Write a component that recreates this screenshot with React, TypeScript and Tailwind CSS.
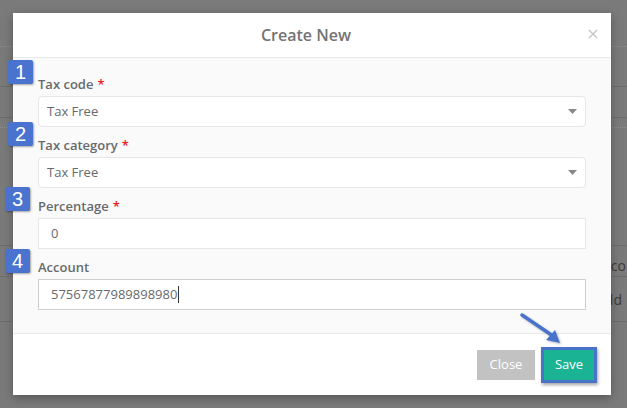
import React from "react";

const fields = [
  { label: "Tax code", required: true, value: "Tax Free", select: true },
  { label: "Tax category", required: true, value: "Tax Free", select: true },
  { label: "Percentage", required: true, value: "0", select: false },
  { label: "Account", required: false, value: "57567877989898980", select: false, focused: true },
];

const badges = [
  { n: "1", cls: "left-[8px] top-[60px]" },
  { n: "2", cls: "left-[8px] top-[122px]" },
  { n: "3", cls: "left-[5px] top-[187px]" },
  { n: "4", cls: "left-[5px] top-[249px]" },
];

const Badge = ({ n, cls }: { n: string; cls: string }) => (
  <div
    className={`absolute ${cls} z-20 flex h-[24px] w-[25px] items-center justify-center rounded-[2px] bg-[#4a73cf] text-[20px] leading-none text-white shadow-[1px_1px_2px_rgba(0,0,0,0.35)]`}
    style={{ fontFamily: "'Liberation Sans', Arial, sans-serif" }}
  >
    {n}
  </div>
);

export default function App() {
  return (
    <div
      className="relative h-[408px] w-[627px] overflow-hidden bg-[#7a7a7a]"
      style={{ fontFamily: "'Open Sans', 'Noto Sans', sans-serif" }}
    >
      {/* page behind the overlay, mostly hidden by the modal */}
      <div className="flex flex-col">
        <div className="h-[47px] border-b border-dotted border-[#8e8e8e]" />
        <div className="h-[40px] border-b border-[#6c6c6c]" />
        <div className="h-[31px] border-b border-[#6c6c6c]" />
        <div className="h-[10px] border-b border-dotted border-[#8e8e8e]" />
        <div className="h-[118px] border-b border-[#6c6c6c]" />
        <div className="flex h-[31px] items-end justify-end overflow-hidden whitespace-nowrap border-b border-[#6c6c6c] pr-[1px] text-[14px] text-[#3c3c3c]">
          Acco
        </div>
        <div className="flex h-[45px] items-center justify-end overflow-hidden whitespace-nowrap border-b border-[#6c6c6c] pr-[5px] text-[14px] text-[#3c3c3c]">
          Add
        </div>
      </div>

      {badges.map((b) => (
        <Badge key={b.n} n={b.n} cls={b.cls} />
      ))}

      {/* modal */}
      <div className="absolute left-[13px] top-[13px] z-10 flex h-[382px] w-[598px] flex-col bg-white shadow-[0_3px_9px_rgba(0,0,0,0.3)]">
        <div className="relative flex h-[45px] shrink-0 items-center justify-center border-b border-[#e7eaec] pr-[12px]">
          <h4 className="text-[16px] font-semibold text-[#737373]">Create New</h4>
          <svg className="absolute right-[13px] top-[16px]" width="10" height="10" viewBox="0 0 10 10">
            <path d="M1 1 L9 9 M9 1 L1 9" stroke="#c4c4c4" strokeWidth="1.4" />
          </svg>
        </div>

        <div className="h-[275px] shrink-0 bg-[#fafafa] px-[25px] pt-[17px]">
          {fields.map((f) => (
            <div key={f.label} className="mb-[9px]">
              <label className="mb-[3px] block h-[18px] text-[13px] font-semibold leading-[18px] text-[#676a6c]">
                {f.label}
                {f.required && <span className="ml-[4px] text-[#ed1c24]">*</span>}
              </label>
              {f.select ? (
                <div className="flex h-[31px] items-center justify-between rounded-[4px] border border-[#e5e6e7] bg-white pl-[8px] pr-[8px] text-[13px] text-[#676a6c]">
                  <span>{f.value}</span>
                  <svg width="9" height="5" viewBox="0 0 9 5">
                    <path d="M0 0 H9 L4.5 5 Z" fill="#888" />
                  </svg>
                </div>
              ) : (
                <div
                  className={`flex h-[31px] items-center border bg-white pl-[12px] text-[13px] text-[#676a6c] ${
                    f.focused ? "border-[#cfcfcf]" : "border-[#e5e6e7]"
                  }`}
                >
                  <span>{f.value}</span>
                  {f.focused && <span className="ml-[1px] h-[17px] w-[1px] bg-[#333]" />}
                </div>
              )}
            </div>
          ))}
        </div>

        <div className="flex flex-1 items-center justify-end border-t border-[#e7eaec] pr-[14px]">
          <button className="h-[30px] w-[58px] bg-[#c2c2c2] text-[13px] text-white">Close</button>
          <div className="ml-[6px] border-[3px] border-[#4a72c8] shadow-[1px_2px_3px_rgba(0,0,0,0.35)]">
            <button className="block h-[30px] w-[50px] bg-[#1ab394] text-[13px] text-white">Save</button>
          </div>
        </div>
      </div>

      {/* pointer arrow */}
      <svg className="absolute left-[515px] top-[308px] z-20" width="52" height="42" viewBox="0 0 52 42">
        <defs>
          <filter id="sh" x="-20%" y="-20%" width="140%" height="140%">
            <feDropShadow dx="1" dy="1" stdDeviation="0.8" floodColor="#000" floodOpacity="0.3" />
          </filter>
        </defs>
        <g filter="url(#sh)">
          <path d="M7 7 L38 28" stroke="#4a73cb" strokeWidth="3.5" strokeLinecap="round" />
          <path d="M45 35 L31 32 L40 22 Z" fill="#4a73cb" />
        </g>
      </svg>
    </div>
  );
}
